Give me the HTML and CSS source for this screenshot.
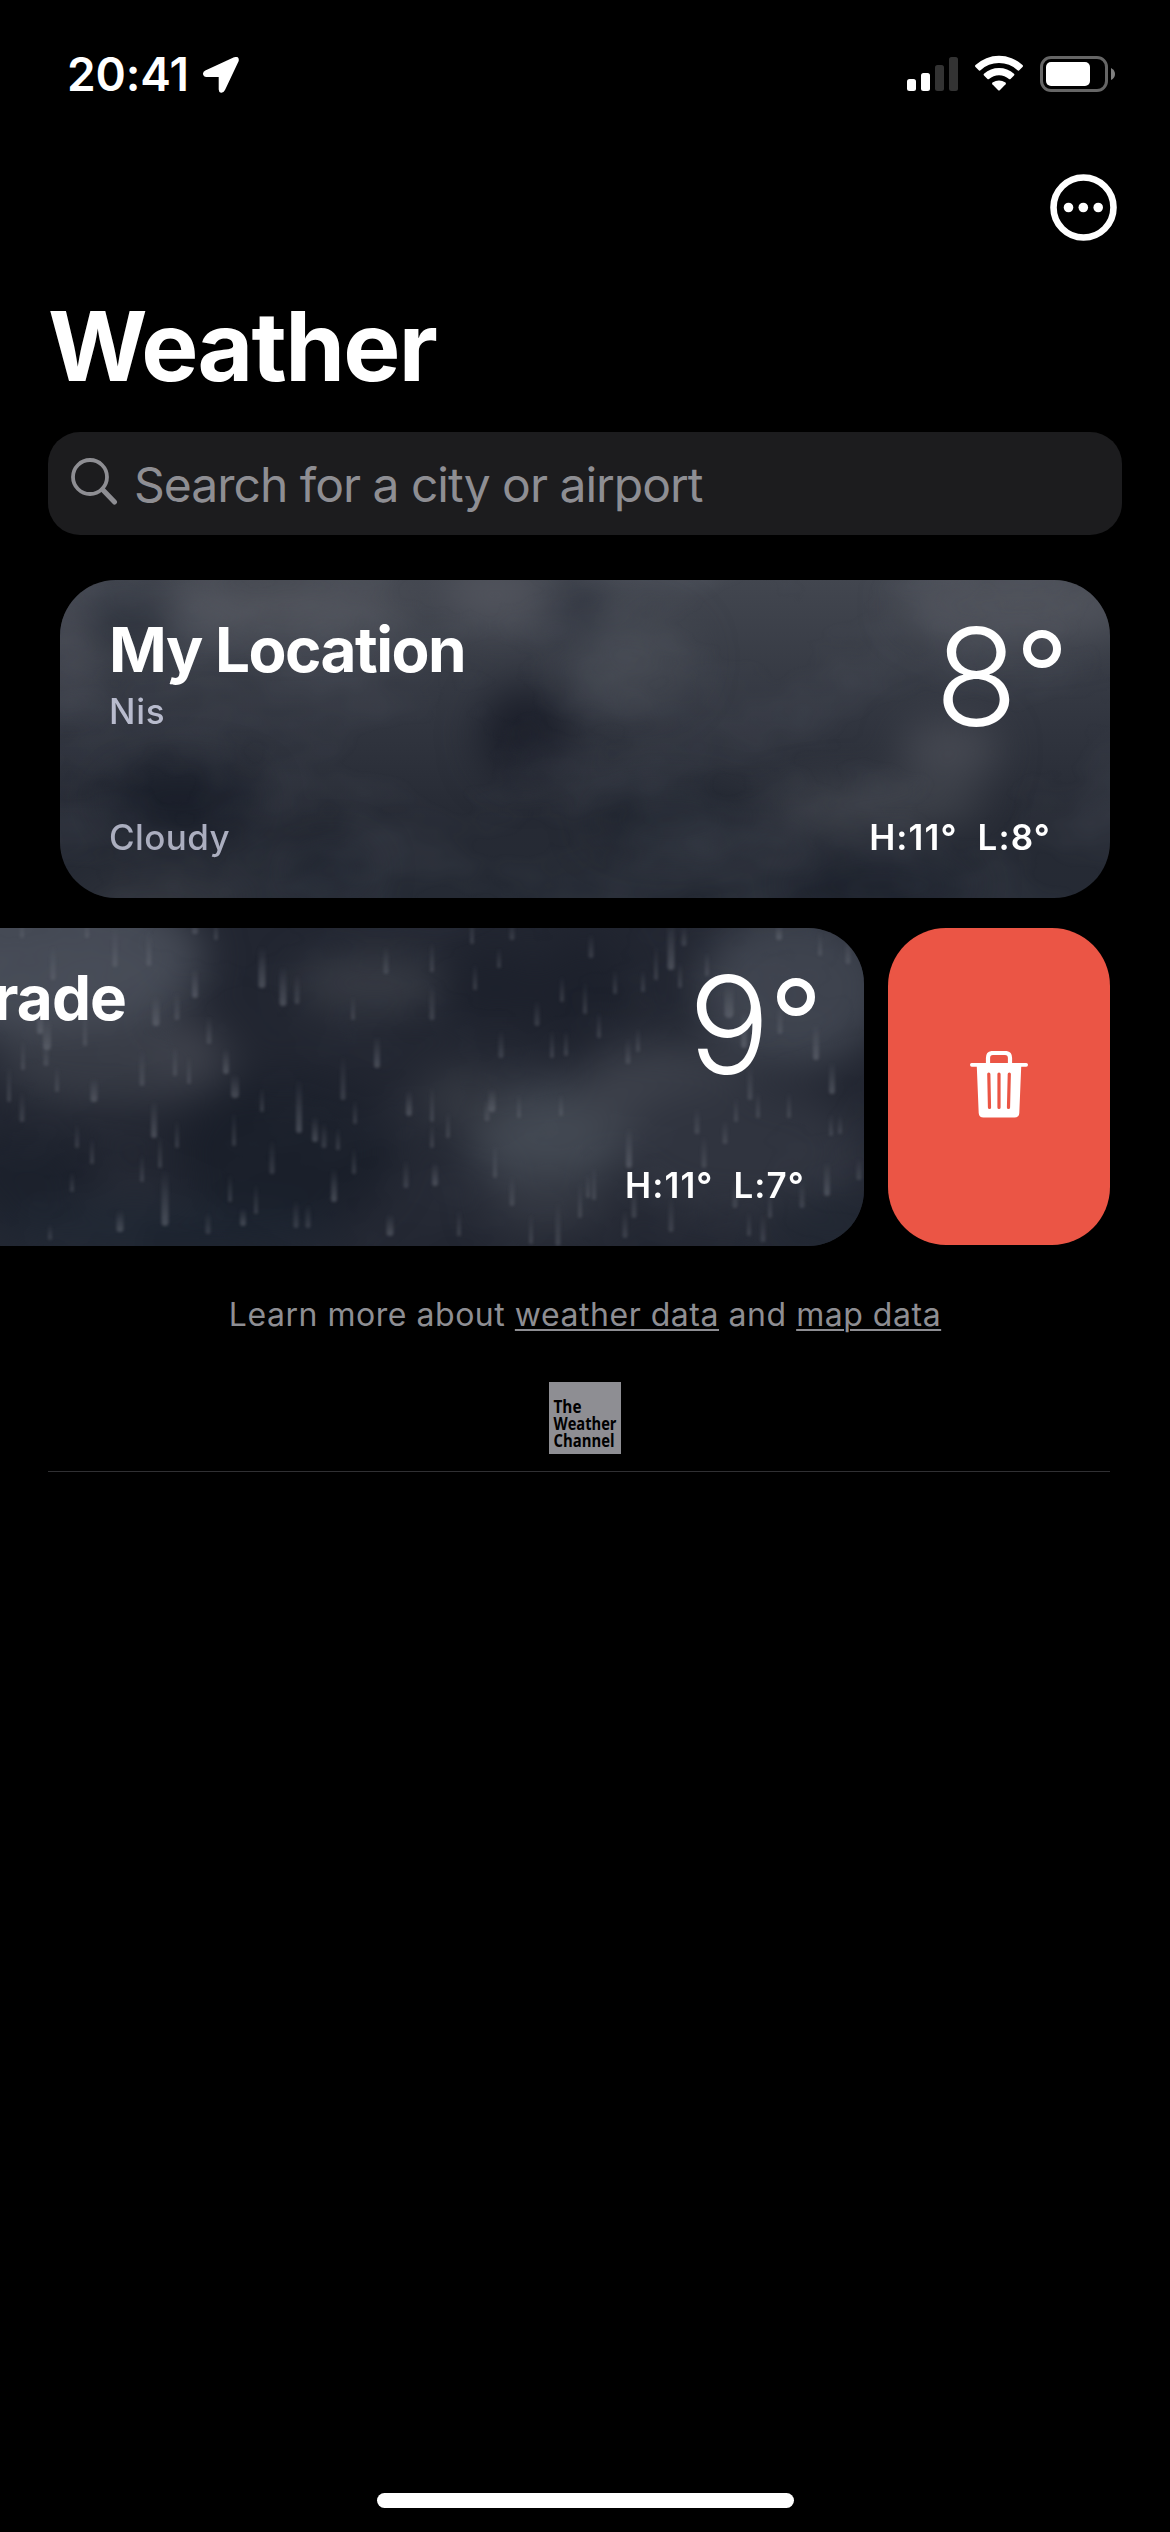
FILE: index.html
```html
<!DOCTYPE html>
<html lang="en">
<head>
<meta charset="utf-8">
<title>Weather</title>
<link rel="stylesheet" href="styles.css">
</head>
<body>
<main class="screen">
  <header class="status">
    <div class="status-left">
      <span class="time">20:41</span>
      <svg class="arrow" width="36" height="36" viewBox="0 0 36 36"><path d="M31 .3Q36.500 -1.500 35.700 4L22 33Q20.500 36 18 35.700Q15.700 35 15.700 32.500V20H3Q.5 19.700 0 17.300Q-.2 14.800 2.300 13.500Z" fill="#fff"/></svg>
    </div>
    <div class="status-right">
      <svg width="51" height="34" viewBox="0 0 51 34"><g fill="#fff"><rect y="22" width="9" height="12" rx="2.500"/><rect x="14" y="16" width="9" height="18" rx="2.500"/></g><g fill="#333"><rect x="28" y="8" width="9" height="26" rx="2.500"/><rect x="42" width="9" height="34" rx="2.500"/></g></svg>
      <svg class="wifi" width="48" height="36" viewBox="0 0 48 36" fill="#fff"><path d="M.5 10A34.500 34.500 0 0 1 47.500 10Q48.500 11 47.500 12L44 15.400Q43.300 16 42.500 15.300A27 27 0 0 0 5.500 15.300Q4.700 16 4 15.400L.5 12Q-.5 11 .5 10Z"/><path d="M9 18.700A22.500 22.500 0 0 1 39 18.700Q40 19.700 39 20.500L35.500 24Q34.800 24.600 34 24A15 15 0 0 0 14 24Q13.200 24.600 12.500 24L9 20.500Q8 19.700 9 18.700Z"/><path d="M17.500 27.500Q24 23.500 30.500 27.500Q31.500 28.300 30.600 29.300L24.800 35.200Q24 36 23.200 35.200L17.400 29.300Q16.500 28.300 17.500 27.500Z"/></svg>
      <svg width="75" height="36" viewBox="0 0 75 36"><rect x="1.500" y="1.500" width="65" height="33" rx="9.500" fill="none" stroke="#666" stroke-width="3"/><rect x="6" y="6" width="44" height="24" rx="5" fill="#fff"/><path d="M71 12Q75 14 75 18T71 24Z" fill="#808080"/></svg>
    </div>
  </header>

  <div class="toolbar">
    <svg width="67" height="67" viewBox="0 0 67 67"><circle cx="33.500" cy="33.500" r="30" fill="none" stroke="#fff" stroke-width="6.600"/><g fill="#fff"><circle cx="18.500" cy="33.500" r="4.800"/><circle cx="33.300" cy="33.500" r="4.800"/><circle cx="48.200" cy="33.500" r="4.800"/></g></svg>
  </div>

  <h1 class="title">Weather</h1>

  <div class="search">
    <svg width="47" height="48" viewBox="0 0 47 48" fill="none" stroke="#8e8e93"><circle cx="19" cy="19" r="17" stroke-width="3.800"/><path d="M31.500 31.500L43.500 44" stroke-width="5" stroke-linecap="round"/></svg>
    <span>Search for a city or airport</span>
  </div>

  <section class="cards">
    <article class="card">
      <svg class="sky" viewBox="0 0 1050 318" preserveAspectRatio="none">
        <defs>
          <linearGradient id="base" x2="0" y2="1"><stop stop-color="#42464f"/><stop offset=".45" stop-color="#31353f"/><stop offset=".75" stop-color="#262a34"/><stop offset="1" stop-color="#252a34"/></linearGradient>
          <filter id="soft" x="-50%" y="-50%" width="200%" height="200%" color-interpolation-filters="sRGB"><feGaussianBlur stdDeviation="20"/></filter>
          <filter id="wisps" x="0" y="0" width="100%" height="100%" color-interpolation-filters="sRGB"><feTurbulence type="fractalNoise" baseFrequency=".006 .009" numOctaves="4" seed="8"/><feColorMatrix values="0 0 0 0 .5  0 0 0 0 .52  0 0 0 0 .57  1.100 0 0 0 -.42"/></filter>
        </defs>
        <rect width="1050" height="318" fill="url(#base)"/>
        <g filter="url(#soft)">
          <ellipse cx="230" cy="25" rx="130" ry="28" fill="#51545b" opacity=".8"/>
          <ellipse cx="435" cy="15" rx="55" ry="32" fill="#555760" opacity=".8"/>
          <ellipse cx="960" cy="25" rx="120" ry="40" fill="#555861" opacity=".7"/>
          <ellipse cx="72" cy="40" rx="45" ry="28" fill="#20252f" opacity=".8"/>
          <ellipse cx="10" cy="70" rx="22" ry="60" fill="#4b4e57" opacity=".8"/>
          <ellipse cx="520" cy="35" rx="22" ry="40" fill="#292e39" opacity=".7"/>
          <ellipse cx="575" cy="80" rx="60" ry="50" fill="#474b54" opacity=".7"/>
          <ellipse cx="465" cy="155" rx="45" ry="48" fill="#191d28" opacity=".9"/>
          <ellipse cx="120" cy="220" rx="80" ry="36" fill="#171c27" opacity=".8"/>
          <ellipse cx="270" cy="290" rx="42" ry="25" fill="#171c27" opacity=".8"/>
          <ellipse cx="100" cy="318" rx="90" ry="18" fill="#393b41" opacity=".6"/>
          <ellipse cx="610" cy="240" rx="80" ry="32" fill="#1e232e" opacity=".7"/>
          <ellipse cx="890" cy="170" rx="50" ry="30" fill="#50535b" opacity=".7"/>
          <ellipse cx="820" cy="225" rx="110" ry="20" fill="#484c54" opacity=".8"/>
          <ellipse cx="820" cy="305" rx="100" ry="25" fill="#161c27" opacity=".8"/>
        </g>
        <rect width="1050" height="318" filter="url(#wisps)" opacity=".3"/>
      </svg>
      <div class="info">
        <h2>My Location</h2>
        <p class="place">Nis</p>
        <p class="condition">Cloudy</p>
      </div>
      <div class="temps">
        <p class="now"><span>8</span><i class="degree"></i></p>
        <p class="range"><span>H:11°</span><span>L:8°</span></p>
      </div>
    </article>

    <div class="swiped">
      <article class="card">
        <svg class="sky" viewBox="0 0 1050 318" preserveAspectRatio="none">
          <defs><linearGradient id="drop" x2="0" y2="1"><stop stop-color="#7b7f89" stop-opacity="0"/><stop offset="1" stop-color="#7b7f89" stop-opacity=".62"/></linearGradient><filter id="mist" color-interpolation-filters="sRGB"><feGaussianBlur stdDeviation="1.500"/></filter></defs>
          <rect width="1050" height="318" fill="#222631"/>
          <g filter="url(#soft)">
            <ellipse cx="230" cy="30" rx="160" ry="80" fill="#454a55"/>
            <ellipse cx="300" cy="135" rx="120" ry="42" fill="#363a44"/>
            <ellipse cx="370" cy="120" rx="35" ry="30" fill="#42454f" opacity=".8"/>
            <ellipse cx="210" cy="245" rx="70" ry="42" fill="#1b202b"/>
            <ellipse cx="560" cy="55" rx="80" ry="28" fill="#363a43"/>
            <ellipse cx="470" cy="225" rx="110" ry="75" fill="#1a1f2a"/>
            <ellipse cx="680" cy="60" rx="55" ry="40" fill="#1d212c"/>
            <ellipse cx="350" cy="300" rx="180" ry="25" fill="#1c2430"/>
            <ellipse cx="735" cy="205" rx="85" ry="50" fill="#424852"/>
            <ellipse cx="650" cy="170" rx="48" ry="28" fill="#32363f"/>
            <ellipse cx="770" cy="80" rx="45" ry="75" fill="#1d212c"/>
            <ellipse cx="850" cy="160" rx="90" ry="45" fill="#3c404a"/>
            <ellipse cx="980" cy="60" rx="95" ry="80" fill="#3e434e"/>
            <ellipse cx="925" cy="220" rx="120" ry="65" fill="#30343f"/>
            <ellipse cx="1025" cy="300" rx="70" ry="35" fill="#222833"/>
            <ellipse cx="735" cy="275" rx="65" ry="30" fill="#30343e"/>
          </g>
          <rect width="1050" height="318" filter="url(#wisps)" opacity=".12"/>
          <g id="rain" fill="url(#drop)" filter="url(#mist)"></g>
        </svg>
        <div class="info city"><h2>Belgrade</h2></div>
        <div class="temps">
          <p class="now nine"><span>9</span><i class="degree"></i></p>
          <p class="range"><span>H:11°</span><span>L:7°</span></p>
        </div>
      </article>
      <button class="delete" aria-label="Delete">
        <svg width="58" height="67" viewBox="0 0 58 67"><path d="M18 14V7Q18 2 23 2H35Q40 2 40 7V14" fill="none" stroke="#fff" stroke-width="4.200"/><path d="M1.800 12H56.200Q58 12 58 13.800T56.200 15.700H51.200L49.300 62Q49 66.500 44.500 66.500H13.500Q9 66.500 8.700 62L6.800 15.700H1.800Q0 15.700 0 13.800T1.800 12Z" fill="#fff"/><g stroke="#eb5545" stroke-width="3.200" stroke-linecap="round"><path d="M18.800 23L19.500 56.500M29 23V56.500M39.300 23L38.500 56.500"/></g></svg>
      </button>
    </div>
  </section>

  <footer class="footer">
    <p class="learn">Learn more about <a>weather data</a> and <a>map data</a></p>
    <svg class="channel" width="72" height="72" viewBox="0 0 72 72"><rect width="72" height="72" fill="#8e8e93"/><g><text x="4.500" y="31" textLength="28" lengthAdjust="spacingAndGlyphs">The</text><text x="4.500" y="48" textLength="63" lengthAdjust="spacingAndGlyphs">Weather</text><text x="4.500" y="65" textLength="61" lengthAdjust="spacingAndGlyphs">Channel</text></g></svg>
    <div class="rule"></div>
  </footer>
  <div class="home"></div>
</main>
<script src="rain.js"></script>
</body>
</html>
```

FILE: styles.css
```css
* { box-sizing: border-box; margin: 0; padding: 0; }
body { background: #000; color: #fff; font-family: Inter, "Liberation Sans", sans-serif; }
svg { display: block; flex: none; }
.screen { width: 1170px; height: 2532px; display: flex; flex-direction: column; overflow: hidden; }
.status { height: 148px; padding: 55px 55px 0 67px; display: flex; justify-content: space-between; align-items: flex-start; }
.status-left, .status-right { display: flex; align-items: flex-start; }
.status-left { gap: 15px; padding-top: 2px; }
.time { width: 121px; font-size: 46px; font-weight: 600; line-height: 34px; white-space: nowrap; letter-spacing: -0.1px; }
.status-right { gap: 17px; }
.status-right svg:first-child { margin-top: 2px; }
.status-right svg:last-child { margin-top: 1px; }
.toolbar { height: 152px; display: flex; justify-content: flex-end; padding: 26px 53px 0 0; }
.title { height: 132px; padding-left: 48px; font-size: 96px; line-height: 92px; font-weight: 700; letter-spacing: -1.7px; }
.search { margin: 0 48px; height: 103px; flex: none; border-radius: 32px; background: #1c1c1e; color: #8e8e93; display: flex; align-items: center; padding: 2px 0 0 23px; gap: 16px; font-size: 48px; }
.search svg { margin-top: -5px; }
.search span { white-space: nowrap; letter-spacing: -1px; }
.cards { padding: 45px 60px 0; display: flex; flex-direction: column; gap: 30px; }
.card { width: 1050px; height: 318px; flex: none; display: grid; grid-template: 1fr / 1fr auto; border-radius: 56px; overflow: hidden; }
.sky { grid-area: 1 / 1 / 2 / 3; width: 1050px; height: 318px; }
.info { grid-area: 1 / 1; z-index: 1; padding: 36px 0 0 49px; }
.info h2 { font-size: 62px; line-height: 68px; font-weight: 700; letter-spacing: -1.5px; white-space: nowrap; }
.info.city h2 { letter-spacing: -0.9px; }
.place, .condition { font-size: 35px; line-height: 40px; font-weight: 500; color: #b8bbcd; }
.place { margin-top: 7px; letter-spacing: .7px; }
.condition { margin-top: 86px; color: #abaebf; letter-spacing: .4px; }
.temps { grid-area: 1 / 2; z-index: 1; display: flex; flex-direction: column; align-items: flex-end; padding: 34px 49px 0 0; }
.now { display: flex; gap: 5px; font-size: 136px; line-height: 126px; font-weight: 300; }
.now.nine { gap: 7px; }
.degree { width: 38px; height: 38px; border: 8px solid #fff; border-radius: 50%; margin-top: 16px; }
.range { display: flex; gap: 20px; margin: 77px 10px 0 0; font-size: 35px; line-height: 40px; font-weight: 600; letter-spacing: 1.1px; }
.swiped { width: 1050px; display: flex; justify-content: flex-end; gap: 24px; }
.delete { width: 222px; height: 317px; flex: none; border: 0; border-radius: 58px; background: #eb5545; display: flex; justify-content: center; align-items: center; padding-bottom: 5px; }
.footer { display: flex; flex-direction: column; align-items: center; padding: 49px 48px 0; }
.learn { font-size: 32px; line-height: 40px; color: #8e8e93; letter-spacing: .53px; white-space: nowrap; }
.learn a { text-decoration: underline; text-decoration-thickness: 2px; text-underline-offset: 3px; }
.channel { margin: 47px 0 17px; font: 700 17px "Open Sans", sans-serif; }
.rule { height: 1px; width: 1062px; background: #303033; align-self: flex-start; }
.home { width: 417px; height: 15px; border-radius: 8px; background: #fff; margin: auto auto 24px; position: relative; left: .5px; }
```

FILE: rain.js
```javascript
// Each drop: x of its centre, y of its lower end, length, width.
const drops = [
  [448,60,42,7],[239,52,34,5],[301,39,40,5],[335,38,36,5],[381,6,10,6],[273,10,18,4],[402,12,20,4],[208,10,16,4],
  [226,106,28,6],[233,122,30,8],[232,138,24,5],[342,98,30,7],[363,92,28,5],[381,70,30,6],[469,78,40,7],[483,76,30,5],
  [271,118,34,4],[328,158,36,5],[361,148,30,4],[375,156,28,4],[395,116,28,5],[412,146,26,6],[421,170,24,8],[448,184,24,4],
  [485,205,54,6],[340,210,38,6],[346,240,32,4],[351,298,56,7],[278,236,26,4],[263,220,24,4],[243,164,26,4],[280,174,24,7],
  [208,194,30,5],[195,174,36,4],[209,142,30,4],[363,220,28,4],[420,218,34,4],[458,246,34,5],[416,274,28,4],[442,286,30,4],
  [429,298,18,6],[394,306,22,5],[306,304,22,7],[328,254,28,4],[258,264,20,4],[236,312,16,4],[501,214,26,6],[510,220,26,5],
  [524,222,22,4],[529,172,44,5],[541,196,24,4],[540,246,26,4],[520,274,34,6],[482,300,28,5],[494,300,24,5],[576,308,22,7],
  [563,140,32,6],[572,46,28,5],[618,92,36,5],[539,92,24,4],[618,44,30,4],[661,62,26,4],[685,40,20,4],[658,16,28,4],
  [698,12,18,5],[723,98,26,5],[748,74,26,4],[771,86,32,4],[752,128,26,4],[687,130,28,5],[738,130,28,4],[777,30,24,5],
  [618,194,36,4],[595,188,26,6],[618,220,24,4],[634,210,26,4],[678,184,24,7],[673,193,22,5],[705,190,24,4],[747,188,22,4],
  [681,250,34,4],[698,278,30,5],[621,258,24,6],[592,260,28,5],[645,308,26,4],[744,318,44,5],[717,316,30,4],[774,270,24,4],
  [857,42,50,7],[842,52,34,4],[870,18,20,5],[915,90,34,9],[930,120,38,6],[866,60,26,4],[1002,132,36,6],[966,106,30,5],
  [814,136,26,5],[824,124,24,4],[785,110,26,4],[801,66,24,4],[1018,166,32,6],[936,172,36,5],[944,190,26,4],[975,190,26,4],
  [922,194,24,4],[883,206,26,5],[911,216,24,5],[1017,208,22,4],[1026,206,18,4],[815,240,40,6],[820,290,36,5],[811,310,28,5],
  [857,304,34,5],[921,280,28,5],[956,290,28,4],[988,280,28,5],[1013,268,34,6],[890,240,32,5],[780,272,34,4],[1045,252,22,5],
  [1034,36,26,5],[1006,28,24,4],[965,12,16,6],[829,64,22,4],[893,48,24,4],[766,290,36,4],[935,308,24,4],[949,314,28,5]
];
const ns = "http://www.w3.org/2000/svg";
const rain = document.getElementById("rain");
for (const [x, y, length, width] of drops) {
  const drop = document.createElementNS(ns, "rect");
  drop.setAttribute("x", x - width / 2);
  drop.setAttribute("y", y - length);
  drop.setAttribute("width", width);
  drop.setAttribute("height", length);
  drop.setAttribute("rx", width / 2);
  drop.setAttribute("opacity", width > 5 ? .7 : .5);
  rain.appendChild(drop);
}
```
